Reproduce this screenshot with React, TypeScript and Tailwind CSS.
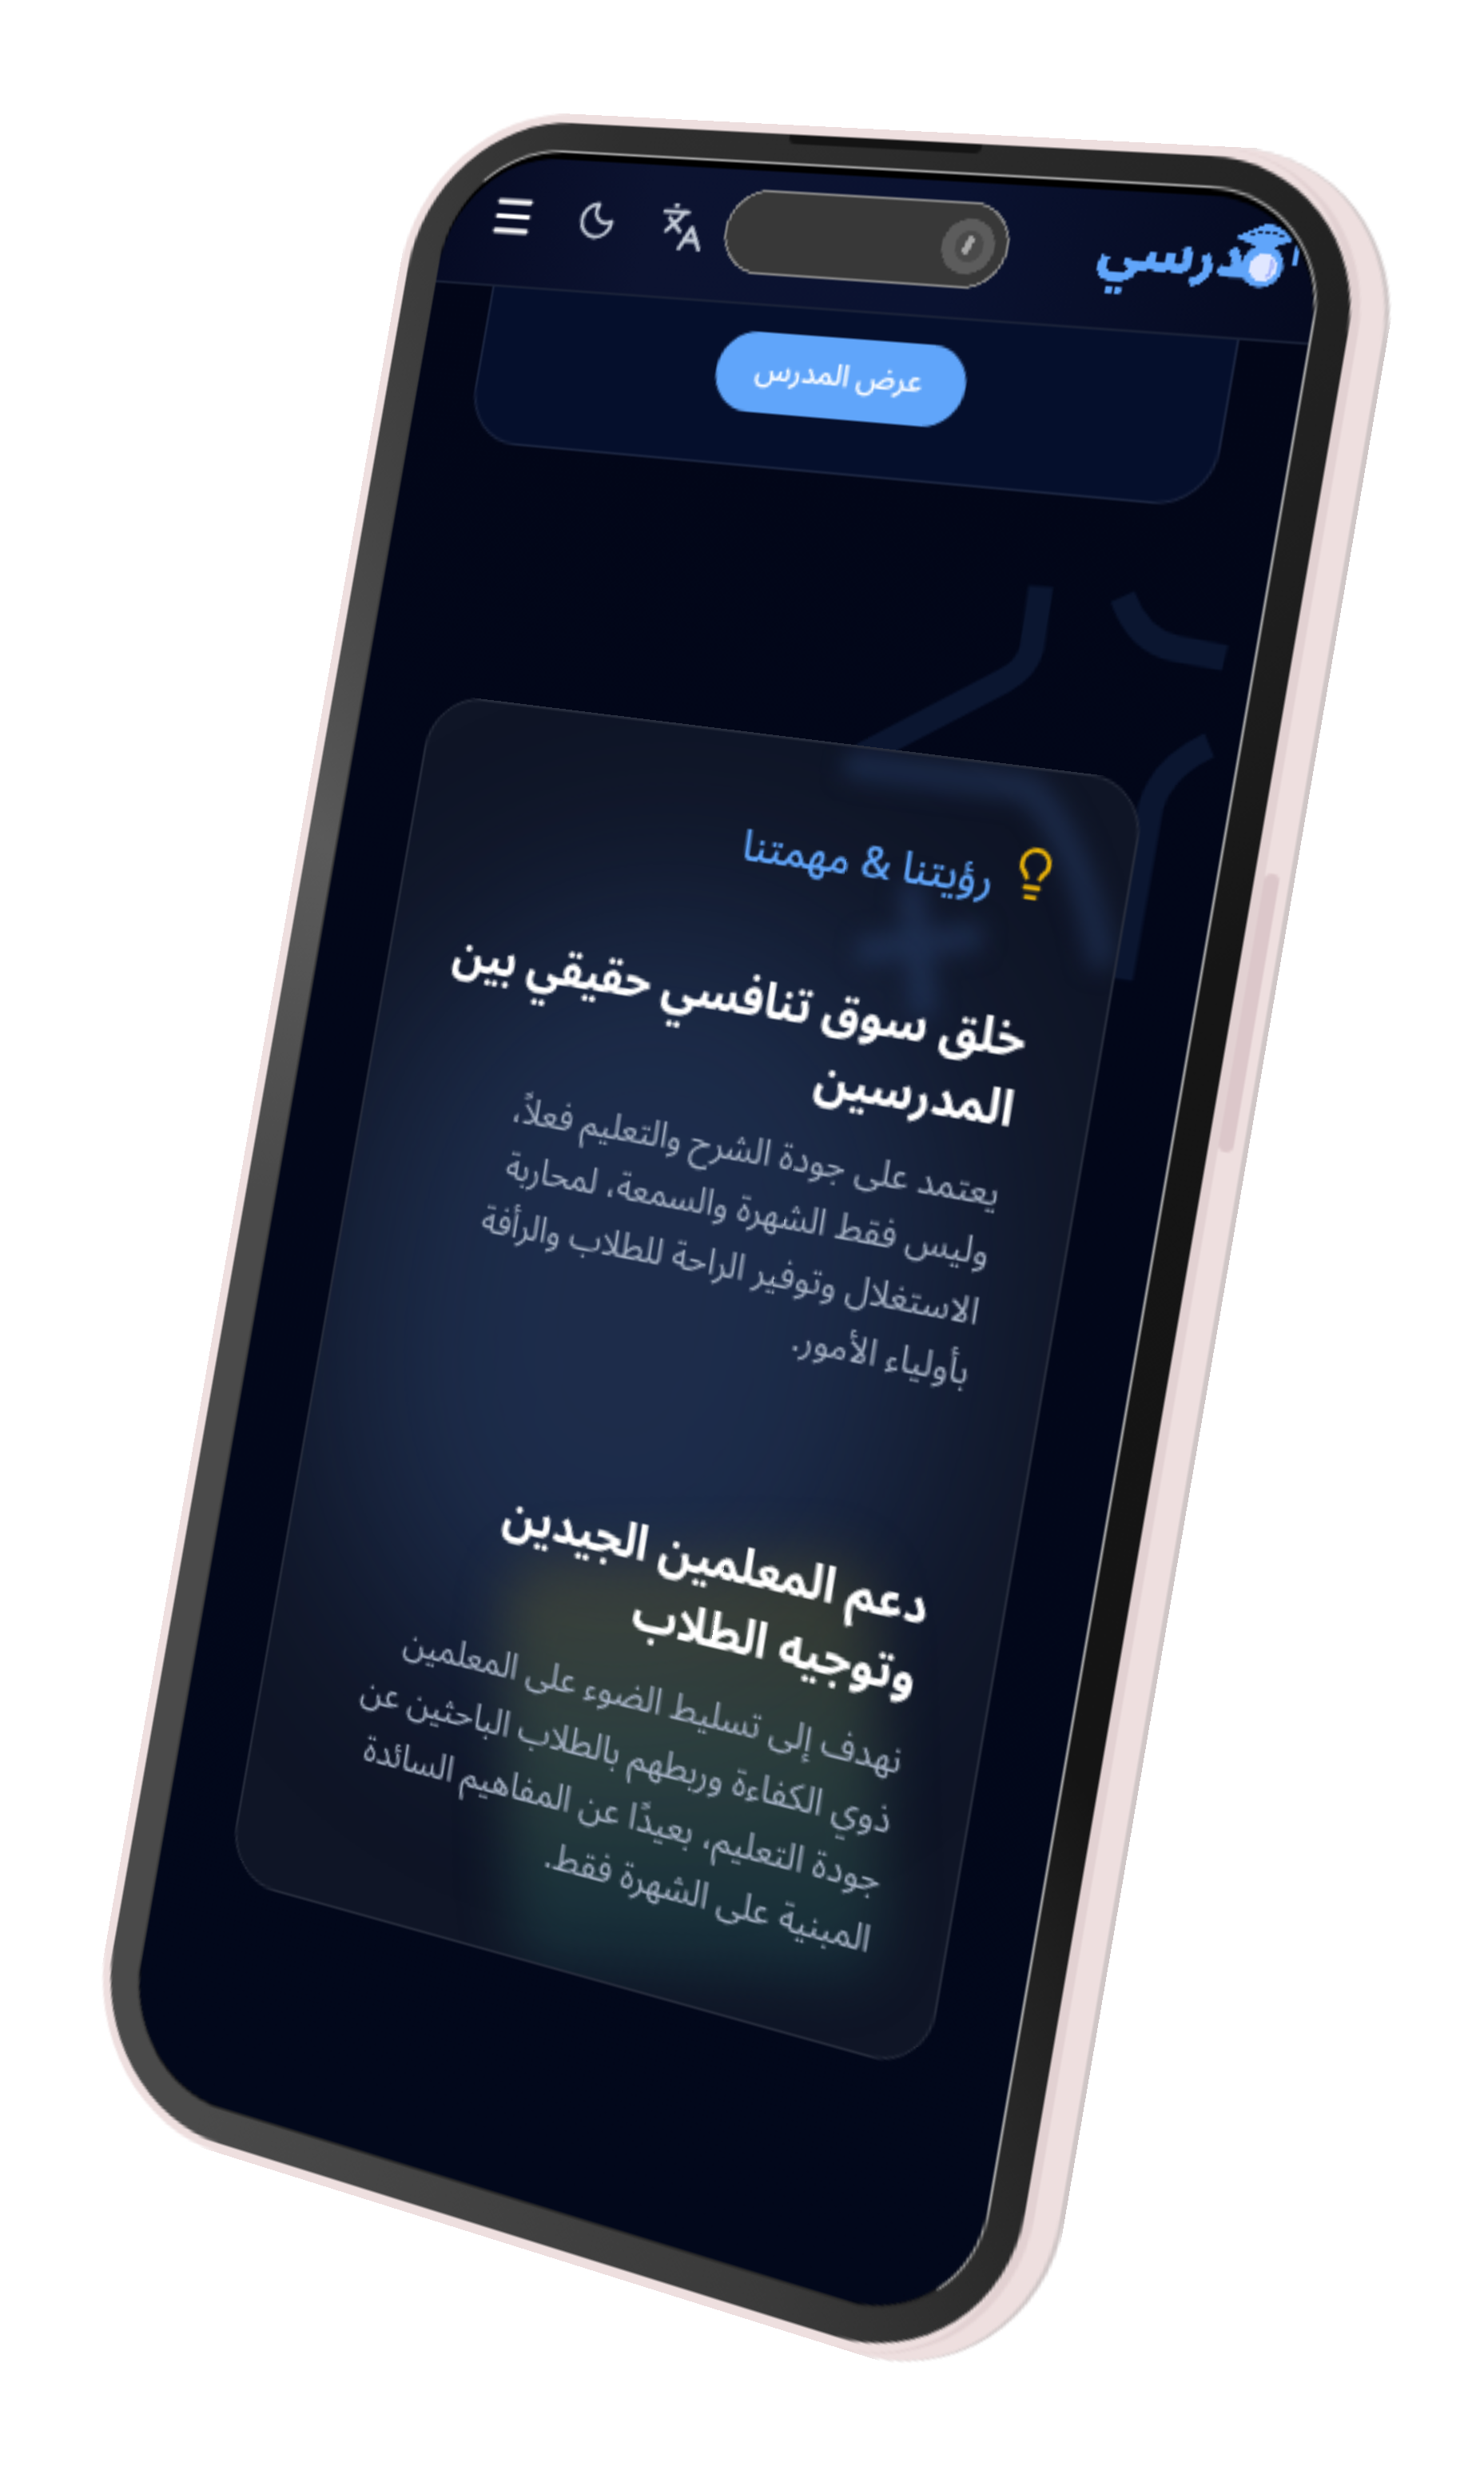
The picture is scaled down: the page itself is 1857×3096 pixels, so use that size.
import { Languages, Lightbulb, Menu, Moon } from "lucide-react";

type Pt = [number, number];

const SCREEN_W = 393;
const SCREEN_H = 852;
const ORIGIN_X = 18;
const ORIGIN_Y = 16;

// Where the corners of the screen land on the page.
const CORNERS: Pt[] = [
  [573, 181],
  [1673, 241],
  [1211, 2929],
  [149, 2601],
];

function homography(q: Pt[]) {
  const [[x0, y0], [x1, y1], [x2, y2], [x3, y3]] = q;
  const dx1 = x1 - x2;
  const dx2 = x3 - x2;
  const sx = x0 - x1 + x2 - x3;
  const dy1 = y1 - y2;
  const dy2 = y3 - y2;
  const sy = y0 - y1 + y2 - y3;
  const den = dx1 * dy2 - dx2 * dy1;
  const g = (sx * dy2 - dx2 * sy) / den;
  const h = (dx1 * sy - sx * dy1) / den;
  const a = x1 - x0 + g * x1;
  const b = x3 - x0 + h * x3;
  const d = y1 - y0 + g * y1;
  const e = y3 - y0 + h * y3;
  const A = a / SCREEN_W;
  const B = b / SCREEN_H;
  const C = x0 - A * ORIGIN_X - B * ORIGIN_Y;
  const D = d / SCREEN_W;
  const E = e / SCREEN_H;
  const F = y0 - D * ORIGIN_X - E * ORIGIN_Y;
  const G = g / SCREEN_W;
  const H = h / SCREEN_H;
  const I = 1 - G * ORIGIN_X - H * ORIGIN_Y;
  return { A, B, C, D, E, F, G, H, I };
}

const M = homography(CORNERS);
const phoneTransform = `matrix3d(${M.A},${M.D},0,${M.G},${M.B},${M.E},0,${M.H},0,0,1,0,${M.C},${M.F},0,${M.I})`;

// From a point on the page back to the flat screen.
function flat(X: number, Y: number): string {
  const { A, B, C, D, E, F, G, H, I } = M;
  const a = E * I - F * H;
  const b = C * H - B * I;
  const c = B * F - C * E;
  const d = F * G - D * I;
  const e = A * I - C * G;
  const f = C * D - A * F;
  const g = D * H - E * G;
  const h = B * G - A * H;
  const i = A * E - B * D;
  const w = g * X + h * Y + i;
  const x = (a * X + b * Y + c) / w - ORIGIN_X;
  const y = (d * X + e * Y + f) / w - ORIGIN_Y;
  return `${x.toFixed(1)} ${y.toFixed(1)}`;
}

const decorPaths = [
  `M${flat(1306, 722)} L${flat(1295, 800)} Q${flat(1288, 826)} ${flat(1260, 841)} L${flat(1080, 935)}`,
  `M${flat(1409, 735)} Q${flat(1428, 790)} ${flat(1475, 800)} L${flat(1538, 812)}`,
  `M${flat(1518, 922)} Q${flat(1458, 950)} ${flat(1444, 1000)} L${flat(1406, 1216)}`,
];

// The same drawing as it shows, softened, through the glass card.
const glassPaths = [
  `M${flat(1060, 945)} L${flat(1290, 975)} Q${flat(1350, 1030)} ${flat(1385, 1200)}`,
  `M${flat(1076, 1181)} L${flat(1232, 1162)}`,
  `M${flat(1142, 1095)} L${flat(1160, 1262)}`,
];

const arabic = "font-['Noto_Sans_Arabic','DejaVu_Sans',sans-serif]";

function Logo() {
  return (
    <div dir="rtl" className={`flex items-center text-[#60a5fa] ${arabic}`}>
      <svg viewBox="0 0 34 30" className="relative z-10 mb-[6px] h-[30px] w-[34px]">
        <rect x="6" y="21" width="8" height="3.4" fill="#60a5fa" />
        <circle cx="19" cy="19" r="8.6" fill="#60a5fa" />
        <circle cx="19.5" cy="19.5" r="5.6" fill="#e0e7ff" />
        <path d="M22.5 16 Q24 19.5 21.5 23.5" stroke="#a5b4fc" strokeWidth="1.2" fill="none" />
        <path d="M6 8 L19 1.5 L33 7 L19 12.5 Z" fill="#60a5fa" />
        <path d="M32 7 V18" stroke="#60a5fa" strokeWidth="2" />
        <path d="M12 7 Q19 3.5 26 7" stroke="#0b1a3a" strokeWidth="0.8" strokeDasharray="2 1" fill="none" />
      </svg>
      <span className="-mr-[12px] text-[21.5px] leading-none font-black">درسي</span>
    </div>
  );
}

function Island() {
  return (
    <div className="absolute top-[8px] left-[133px] z-20 flex h-[36px] w-[127px] items-center justify-end rounded-full border border-[#8a8a8a] bg-[#383838] pr-[5px]">
      <div className="flex h-[23px] w-[23px] items-center justify-center rounded-full bg-[#5c5c5c]">
        <div className="flex h-[13px] w-[12px] items-center justify-center rounded-full bg-[#4a4a4a]">
          <div className="h-[8px] w-[3px] rotate-[20deg] rounded-full bg-[#a8a8a8]" />
        </div>
      </div>
    </div>
  );
}

function Header() {
  return (
    <header className="relative z-10 flex h-[57px] items-center justify-between border-b border-[#1a2238] bg-[linear-gradient(90deg,#060b24_0%,#0c1330_25%,#0a1230_60%,#050a20_100%)] pr-[9px] pb-[5px] pl-[21px]">
      <div className="flex items-center gap-[20px] text-[#c4ccd8]">
        <Menu className="h-[22px] w-[22px] text-white" strokeWidth={2.4} />
        <Moon className="h-[19px] w-[19px]" strokeWidth={2} />
        <Languages className="h-[22px] w-[22px]" strokeWidth={2} />
      </div>
      <Logo />
    </header>
  );
}

function Section({ title, titleWidth, children, className }: { title: string; titleWidth: string; children: string; className?: string }) {
  return (
    <div className={className}>
      <h3 className={`text-[20px] leading-[28px] font-bold text-white ${titleWidth}`}>{title}</h3>
      <p className="mt-[7px] w-[243px] text-[15.2px] leading-[24px] text-[#a3afc2]">{children}</p>
    </div>
  );
}

function Screen() {
  return (
    <div className="relative h-[852px] w-[393px] overflow-hidden rounded-[52px] border border-t-[#a8a8a8] border-r-[#a8a8a8] border-b-[#2a2a2a] border-l-[#3a3a3a] bg-black">
      <div className="relative mt-[3px] h-[849px] overflow-hidden rounded-[50px] bg-[linear-gradient(180deg,#020618_0%,#02081b_100%)]">
        <svg viewBox="0 0 393 852" className="absolute inset-0 h-full w-full" fill="none">
          {decorPaths.map((d) => (
            <path key={d} d={d} stroke="#0b1630" strokeWidth="10.5" />
          ))}
        </svg>
        <Island />
        <Header />
        <div dir="rtl" className="relative mx-[28px] -mt-[2px] flex h-[70px] items-start justify-center rounded-b-[24px] border border-t-0 border-[#1b2540] bg-[#050f2c] pt-[13px]">
          <button className={`h-[34px] w-[112px] rounded-[18px] bg-[#60a5fa] text-[13px] font-medium text-white ${arabic}`}>عرض المدرس</button>
        </div>
        <main
          dir="rtl"
          className={`relative mx-[34px] mt-[110px] h-[517px] overflow-hidden rounded-[24px] border border-[#262c3c] bg-[#0f1526] pt-[30px] pr-[31px] pl-[22px] ${arabic}`}
        >
          <svg viewBox="0 0 393 852" className="absolute top-[-236px] left-[-35px] h-[849px] w-[391px] blur-[5px]" fill="none">
            {glassPaths.map((d) => (
              <path key={d} d={d} stroke="#1c2b4a" strokeWidth="10.5" />
            ))}
          </svg>
          <div className="absolute top-[70px] left-[5px] h-[340px] w-[270px] rounded-full bg-[#2f4a78] opacity-45 blur-[46px]" />
          <div className="absolute top-[338px] left-[118px] h-[165px] w-[165px] -rotate-[12deg] rounded-[20px] bg-[linear-gradient(180deg,#7a6a20_0%,#5d8561_50%,#215d62_100%)] opacity-[0.34] blur-[12px]" />
          <div className="relative">
            <div className="flex items-center gap-[5px]">
              <Lightbulb className="mb-[9px] -mr-[3px] h-[23px] w-[23px] text-[#eab308]" strokeWidth={2} />
              <span className="text-[18px] leading-[28px] font-medium text-[#60a5fa]">رؤيتنا &amp; مهمتنا</span>
            </div>
            <Section className="mt-[33px]" titleWidth="w-full" title="خلق سوق تنافسي حقيقي بين المدرسين">
              يعتمد على جودة الشرح والتعليم فعلاً، وليس فقط الشهرة والسمعة، لمحاربة الاستغلال وتوفير الراحة للطلاب والرأفة بأولياء الأمور.
            </Section>
            <Section className="mt-[70px]" titleWidth="w-[220px]" title="دعم المعلمين الجيدين وتوجيه الطلاب">
              نهدف إلى تسليط الضوء على المعلمين ذوي الكفاءة وربطهم بالطلاب الباحثين عن جودة التعليم، بعيدًا عن المفاهيم السائدة المبنية على الشهرة فقط.
            </Section>
          </div>
        </main>
      </div>
    </div>
  );
}

export default function App() {
  return (
    <div className="h-[3096px] w-[1857px] overflow-hidden bg-white">
      <div className="relative h-[886px] w-[429px] origin-top-left" style={{ transform: phoneTransform }}>
        <div className="absolute top-[0px] left-[12px] h-full w-full rounded-[74px] border-r-2 border-[#cfc6c6] bg-[#eedfdf]">
          <div className="absolute top-[285px] right-[4px] h-[110px] w-[6px] rounded-[3px] bg-[#dcc7ca]" />
        </div>
        <div className="relative h-full w-full rounded-[72px] border-r-[4px] border-[#e2d1d2] bg-[#eedfdf] p-[4px] pr-0">
          <div className="relative h-full w-full rounded-[68px] bg-[conic-gradient(#2c2c2c_0deg,#151515_60deg,#141414_135deg,#3a3a3a_165deg,#4a4a4a_200deg,#4a4a4a_260deg,#5a5a5a_300deg,#2e2e2e_345deg,#2c2c2c_360deg)] pt-[12px] pl-[14px]">
            <div className="absolute top-[0px] left-[170px] h-[4px] w-[86px] rounded-b-[3px] bg-[#141414]" />
            <Screen />
          </div>
        </div>
      </div>
    </div>
  );
}
